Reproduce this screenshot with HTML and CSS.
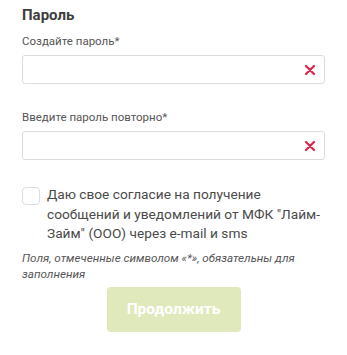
FILE: index.html
```html
<html>

<head>
  <title>Пароль</title>
  <link rel="stylesheet" href="styles.css">
</head>

<body>
  <div class="form">
    <h3>Пароль</h3>

    <div class="field">
      <label>Создайте пароль*</label>
      <div class="input-wrap">
        <input type="password">
        <svg class="clear" width="10" height="10" viewBox="0 0 10 10">
          <path d="M1 1L9 9M9 1L1 9" stroke="#e1234b" stroke-width="2.2" stroke-linecap="round"/>
        </svg>
      </div>
    </div>

    <div class="field">
      <label>Введите пароль повторно*</label>
      <div class="input-wrap">
        <input type="password">
        <svg class="clear" width="10" height="10" viewBox="0 0 10 10">
          <path d="M1 1L9 9M9 1L1 9" stroke="#e1234b" stroke-width="2.2" stroke-linecap="round"/>
        </svg>
      </div>
    </div>

    <div class="agree">
      <span class="checkbox"></span>
      <p>Даю свое согласие на получение сообщений и уведомлений от МФК "Лайм-Займ" (ООО) через e-mail и sms</p>
    </div>

    <p class="note">Поля, отмеченные символом «*», обязательны для заполнения</p>

    <div class="actions">
      <button class="button" disabled>Продолжить</button>
    </div>
  </div>
</body>

</html>
```

FILE: styles.css
```css
body {
  font-family: Roboto, 'Liberation Sans', sans-serif;
  margin: 0;
  background: #fff;
  color: #444;
}

.form {
  padding: 6px 22px 0 22px;
  width: 303px;
}

h3 {
  font-size: 15px;
  font-weight: bold;
  margin: 0 0 10px;
  color: #3d3d3d;
}

.field {
  margin-bottom: 26px;
}

.field label {
  display: block;
  font-size: 11.5px;
  color: #555;
  margin-bottom: 7px;
}

.input-wrap {
  display: flex;
  align-items: center;
  height: 27px;
  border: 1px solid #dcdcdc;
  border-radius: 3px;
  padding: 0 9px;
}

.input-wrap input {
  flex: 1;
  border: none;
  outline: none;
  background: transparent;
  min-width: 0;
}

.clear {
  flex: none;
}

.agree {
  display: flex;
  gap: 7px;
  margin-top: -1px;
}

.checkbox {
  flex: none;
  width: 16px;
  height: 16px;
  border: 1px solid #ddd;
  border-radius: 4px;
  margin-top: 2px;
}

.agree p {
  margin: 0;
  font-size: 13.7px;
  line-height: 19.5px;
  color: #4a4a4a;
}

.note {
  font-size: 11.7px;
  font-style: italic;
  line-height: 16px;
  color: #555;
  margin: 6px 0 0;
}

.actions {
  display: flex;
  justify-content: center;
  margin-top: 5px;
}

.button {
  width: 134px;
  height: 45px;
  border: none;
  border-radius: 4px;
  background: #dfe9bc;
  color: #fff;
  font-family: inherit;
  font-size: 15.5px;
  font-weight: bold;
}
```
